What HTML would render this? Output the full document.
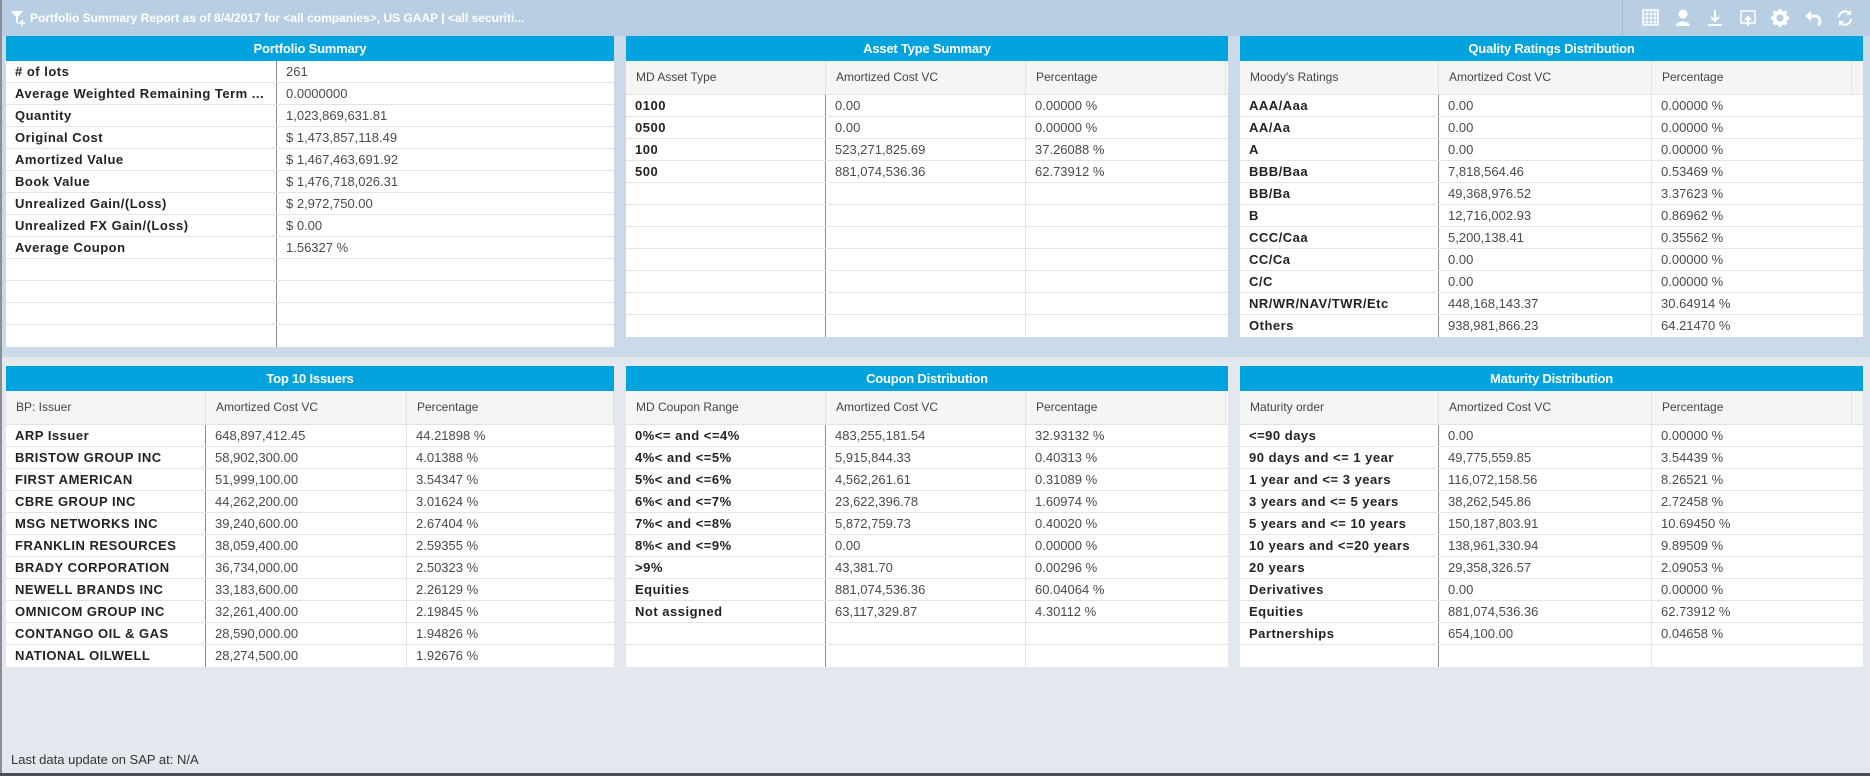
<!DOCTYPE html>
<html><head><meta charset="utf-8"><style>
*{margin:0;padding:0;box-sizing:border-box}
body{width:1870px;height:776px;overflow:hidden;background:#e3e8ef;font-family:"Liberation Sans",Arial,sans-serif;position:relative}
.topbar{position:absolute;left:0;top:0;width:1870px;height:36px;background:#b7cee3}
.upper{position:absolute;left:0;top:36px;width:1870px;height:321px;background:#cbdae8}
.lb{position:absolute;left:0;top:0;width:2px;height:776px;background:#8a8f96}
.bb{position:absolute;left:0;top:773px;width:1870px;height:3px;background:#4a4f57}
.title{position:absolute;left:30px;top:11px;color:#fff;font-weight:bold;font-size:12px;letter-spacing:0}
.sep{position:absolute;left:1622px;top:0;width:1px;height:36px;background:#9fb3c6}
.panel{position:absolute;background:#fff}
.hd{height:25px;background:#00a3dd;color:#fff;font-weight:bold;font-size:13px;text-align:center;line-height:25px;letter-spacing:-0.2px}
.ch{display:flex;height:34px;background:#f5f5f5;border-bottom:1px solid #e2e2e2}
.ch div{font-size:12px;color:#444;line-height:33px;padding-left:10px;border-right:1px solid #e2e2e2}
.r{display:flex;height:22px;border-bottom:1px solid #e4e4e4}
.r div{font-size:13px;line-height:21px;padding-left:9px;color:#4a4a4a;white-space:nowrap;overflow:hidden}
.r div:first-child{font-weight:bold;color:#222;border-right:1px solid #8c8c8c;letter-spacing:0.5px}
.r div:nth-child(2){border-right:1px solid #e4e4e4}
.foot{position:absolute;left:11px;top:752px;font-size:13px;color:#333}
.ic{position:absolute;top:8px}
</style></head><body>
<div class="topbar"></div>
<div class="upper"></div>
<div class="lb"></div>
<svg style="position:absolute;left:10px;top:10px" width="18" height="17" viewBox="0 0 18 17"><path d="M1 1h12l-5 6v7l-2-2V7z" fill="#fff"/><path d="M12 10v6M9 13h6" stroke="#fff" stroke-width="1.6"/></svg>
<div class="title">Portfolio Summary Report as of 8/4/2017 for &lt;all companies&gt;, US GAAP | &lt;all securiti...</div>
<div class="sep"></div>
<svg class="ic" style="left:1641px" width="20" height="20" viewBox="0 0 20 20"><rect x="2" y="2" width="15" height="15" fill="none" stroke="#fff" stroke-width="1.5"/><path d="M2 6h15M2 10h15M2 14h15M6 2v15M10 2v15M14 2v15" stroke="#fff" stroke-width="1"/></svg>
<svg class="ic" style="left:1673px" width="20" height="20" viewBox="0 0 20 20"><circle cx="10" cy="6" r="4.5" fill="#fff"/><path d="M3 18c0-6 14-6 14 0z" fill="#fff"/></svg>
<svg class="ic" style="left:1705px" width="20" height="20" viewBox="0 0 20 20"><path d="M10 2v11M6 9l4 4 4-4" stroke="#fff" stroke-width="2" fill="none"/><path d="M3 17h14" stroke="#fff" stroke-width="2"/></svg>
<svg class="ic" style="left:1738px" width="20" height="20" viewBox="0 0 20 20"><rect x="3" y="3" width="14" height="12" fill="none" stroke="#fff" stroke-width="1.5"/><path d="M10 18V9M7 12l3-3 3 3" stroke="#fff" stroke-width="2" fill="none"/></svg>
<svg class="ic" style="left:1770px" width="20" height="20" viewBox="0 0 20 20"><circle cx="10" cy="10" r="5.5" fill="none" stroke="#fff" stroke-width="4"/><path d="M10 1v4M10 15v4M1 10h4M15 10h4M3.6 3.6l3 3M13.4 13.4l3 3M3.6 16.4l3-3M13.4 6.6l3-3" stroke="#fff" stroke-width="3"/></svg>
<svg class="ic" style="left:1803px" width="20" height="20" viewBox="0 0 20 20"><path d="M5 8h7a5 5 0 0 1 3 9" stroke="#fff" stroke-width="3" fill="none"/><path d="M2 8l6-5v10z" fill="#fff"/></svg>
<svg class="ic" style="left:1835px" width="20" height="20" viewBox="0 0 20 20"><path d="M4 9a6 6 0 0 1 11-3M16 11a6 6 0 0 1-11 3" stroke="#fff" stroke-width="2.2" fill="none"/><path d="M16 2v5h-5zM4 18v-5h5z" fill="#fff"/></svg>

<div class="panel" style="left:6px;top:36px;width:608px;height:311px">
<div class="hd">Portfolio Summary</div>
<div class="r"><div style="width:271px"># of lots</div><div style="width:337px;border-right:none">261</div></div>
<div class="r"><div style="width:271px">Average Weighted Remaining Term ...</div><div style="width:337px;border-right:none">0.0000000</div></div>
<div class="r"><div style="width:271px">Quantity</div><div style="width:337px;border-right:none">1,023,869,631.81</div></div>
<div class="r"><div style="width:271px">Original Cost</div><div style="width:337px;border-right:none">$ 1,473,857,118.49</div></div>
<div class="r"><div style="width:271px">Amortized Value</div><div style="width:337px;border-right:none">$ 1,467,463,691.92</div></div>
<div class="r"><div style="width:271px">Book Value</div><div style="width:337px;border-right:none">$ 1,476,718,026.31</div></div>
<div class="r"><div style="width:271px">Unrealized Gain/(Loss)</div><div style="width:337px;border-right:none">$ 2,972,750.00</div></div>
<div class="r"><div style="width:271px">Unrealized FX Gain/(Loss)</div><div style="width:337px;border-right:none">$ 0.00</div></div>
<div class="r"><div style="width:271px">Average Coupon</div><div style="width:337px;border-right:none">1.56327 %</div></div>
<div class="r"><div style="width:271px"></div><div style="width:337px;border-right:none"></div></div>
<div class="r"><div style="width:271px"></div><div style="width:337px;border-right:none"></div></div>
<div class="r"><div style="width:271px"></div><div style="width:337px;border-right:none"></div></div>
<div class="r" style="border-bottom:none"><div style="width:271px"></div><div style="width:337px;border-right:none"></div></div>
</div>

<div class="panel" style="left:626px;top:36px;width:602px;height:301px">
<div class="hd">Asset Type Summary</div>
<div class="ch"><div style="width:200px">MD Asset Type</div><div style="width:200px">Amortized Cost VC</div><div style="width:200px">Percentage</div></div>
<div class="r"><div style="width:200px">0100</div><div style="width:200px">0.00</div><div>0.00000 %</div></div>
<div class="r"><div style="width:200px">0500</div><div style="width:200px">0.00</div><div>0.00000 %</div></div>
<div class="r"><div style="width:200px">100</div><div style="width:200px">523,271,825.69</div><div>37.26088 %</div></div>
<div class="r"><div style="width:200px">500</div><div style="width:200px">881,074,536.36</div><div>62.73912 %</div></div>
<div class="r"><div style="width:200px"></div><div style="width:200px"></div><div></div></div>
<div class="r"><div style="width:200px"></div><div style="width:200px"></div><div></div></div>
<div class="r"><div style="width:200px"></div><div style="width:200px"></div><div></div></div>
<div class="r"><div style="width:200px"></div><div style="width:200px"></div><div></div></div>
<div class="r"><div style="width:200px"></div><div style="width:200px"></div><div></div></div>
<div class="r"><div style="width:200px"></div><div style="width:200px"></div><div></div></div>
<div class="r" style="border-bottom:none"><div style="width:200px"></div><div style="width:200px"></div><div></div></div>
</div>

<div class="panel" style="left:1240px;top:36px;width:623px;height:301px">
<div class="hd">Quality Ratings Distribution</div>
<div class="ch"><div style="width:199px">Moody's Ratings</div><div style="width:213px">Amortized Cost VC</div><div style="width:200px">Percentage</div></div>
<div class="r"><div style="width:199px">AAA/Aaa</div><div style="width:213px">0.00</div><div>0.00000 %</div></div>
<div class="r"><div style="width:199px">AA/Aa</div><div style="width:213px">0.00</div><div>0.00000 %</div></div>
<div class="r"><div style="width:199px">A</div><div style="width:213px">0.00</div><div>0.00000 %</div></div>
<div class="r"><div style="width:199px">BBB/Baa</div><div style="width:213px">7,818,564.46</div><div>0.53469 %</div></div>
<div class="r"><div style="width:199px">BB/Ba</div><div style="width:213px">49,368,976.52</div><div>3.37623 %</div></div>
<div class="r"><div style="width:199px">B</div><div style="width:213px">12,716,002.93</div><div>0.86962 %</div></div>
<div class="r"><div style="width:199px">CCC/Caa</div><div style="width:213px">5,200,138.41</div><div>0.35562 %</div></div>
<div class="r"><div style="width:199px">CC/Ca</div><div style="width:213px">0.00</div><div>0.00000 %</div></div>
<div class="r"><div style="width:199px">C/C</div><div style="width:213px">0.00</div><div>0.00000 %</div></div>
<div class="r"><div style="width:199px">NR/WR/NAV/TWR/Etc</div><div style="width:213px">448,168,143.37</div><div>30.64914 %</div></div>
<div class="r" style="border-bottom:none"><div style="width:199px">Others</div><div style="width:213px">938,981,866.23</div><div>64.21470 %</div></div>
</div>

<div class="panel" style="left:6px;top:366px;width:608px;height:301px">
<div class="hd">Top 10 Issuers</div>
<div class="ch"><div style="width:200px">BP: Issuer</div><div style="width:201px">Amortized Cost VC</div><div style="width:207px">Percentage</div></div>
<div class="r"><div style="width:200px">ARP Issuer</div><div style="width:201px">648,897,412.45</div><div>44.21898 %</div></div>
<div class="r"><div style="width:200px">BRISTOW GROUP INC</div><div style="width:201px">58,902,300.00</div><div>4.01388 %</div></div>
<div class="r"><div style="width:200px">FIRST AMERICAN</div><div style="width:201px">51,999,100.00</div><div>3.54347 %</div></div>
<div class="r"><div style="width:200px">CBRE GROUP INC</div><div style="width:201px">44,262,200.00</div><div>3.01624 %</div></div>
<div class="r"><div style="width:200px">MSG NETWORKS INC</div><div style="width:201px">39,240,600.00</div><div>2.67404 %</div></div>
<div class="r"><div style="width:200px">FRANKLIN RESOURCES</div><div style="width:201px">38,059,400.00</div><div>2.59355 %</div></div>
<div class="r"><div style="width:200px">BRADY CORPORATION</div><div style="width:201px">36,734,000.00</div><div>2.50323 %</div></div>
<div class="r"><div style="width:200px">NEWELL BRANDS INC</div><div style="width:201px">33,183,600.00</div><div>2.26129 %</div></div>
<div class="r"><div style="width:200px">OMNICOM GROUP INC</div><div style="width:201px">32,261,400.00</div><div>2.19845 %</div></div>
<div class="r"><div style="width:200px">CONTANGO OIL &amp; GAS</div><div style="width:201px">28,590,000.00</div><div>1.94826 %</div></div>
<div class="r" style="border-bottom:none"><div style="width:200px">NATIONAL OILWELL</div><div style="width:201px">28,274,500.00</div><div>1.92676 %</div></div>
</div>

<div class="panel" style="left:626px;top:366px;width:602px;height:301px">
<div class="hd">Coupon Distribution</div>
<div class="ch"><div style="width:200px">MD Coupon Range</div><div style="width:200px">Amortized Cost VC</div><div style="width:200px">Percentage</div></div>
<div class="r"><div style="width:200px">0%&lt;= and &lt;=4%</div><div style="width:200px">483,255,181.54</div><div>32.93132 %</div></div>
<div class="r"><div style="width:200px">4%&lt; and &lt;=5%</div><div style="width:200px">5,915,844.33</div><div>0.40313 %</div></div>
<div class="r"><div style="width:200px">5%&lt; and &lt;=6%</div><div style="width:200px">4,562,261.61</div><div>0.31089 %</div></div>
<div class="r"><div style="width:200px">6%&lt; and &lt;=7%</div><div style="width:200px">23,622,396.78</div><div>1.60974 %</div></div>
<div class="r"><div style="width:200px">7%&lt; and &lt;=8%</div><div style="width:200px">5,872,759.73</div><div>0.40020 %</div></div>
<div class="r"><div style="width:200px">8%&lt; and &lt;=9%</div><div style="width:200px">0.00</div><div>0.00000 %</div></div>
<div class="r"><div style="width:200px">&gt;9%</div><div style="width:200px">43,381.70</div><div>0.00296 %</div></div>
<div class="r"><div style="width:200px">Equities</div><div style="width:200px">881,074,536.36</div><div>60.04064 %</div></div>
<div class="r"><div style="width:200px">Not assigned</div><div style="width:200px">63,117,329.87</div><div>4.30112 %</div></div>
<div class="r"><div style="width:200px"></div><div style="width:200px"></div><div></div></div>
<div class="r" style="border-bottom:none"><div style="width:200px"></div><div style="width:200px"></div><div></div></div>
</div>

<div class="panel" style="left:1240px;top:366px;width:623px;height:301px">
<div class="hd">Maturity Distribution</div>
<div class="ch"><div style="width:199px">Maturity order</div><div style="width:213px">Amortized Cost VC</div><div style="width:200px">Percentage</div></div>
<div class="r"><div style="width:199px">&lt;=90 days</div><div style="width:213px">0.00</div><div>0.00000 %</div></div>
<div class="r"><div style="width:199px">90 days and &lt;= 1 year</div><div style="width:213px">49,775,559.85</div><div>3.54439 %</div></div>
<div class="r"><div style="width:199px">1 year and &lt;= 3 years</div><div style="width:213px">116,072,158.56</div><div>8.26521 %</div></div>
<div class="r"><div style="width:199px">3 years and &lt;= 5 years</div><div style="width:213px">38,262,545.86</div><div>2.72458 %</div></div>
<div class="r"><div style="width:199px">5 years and &lt;= 10 years</div><div style="width:213px">150,187,803.91</div><div>10.69450 %</div></div>
<div class="r"><div style="width:199px">10 years and &lt;=20 years</div><div style="width:213px">138,961,330.94</div><div>9.89509 %</div></div>
<div class="r"><div style="width:199px">20 years</div><div style="width:213px">29,358,326.57</div><div>2.09053 %</div></div>
<div class="r"><div style="width:199px">Derivatives</div><div style="width:213px">0.00</div><div>0.00000 %</div></div>
<div class="r"><div style="width:199px">Equities</div><div style="width:213px">881,074,536.36</div><div>62.73912 %</div></div>
<div class="r"><div style="width:199px">Partnerships</div><div style="width:213px">654,100.00</div><div>0.04658 %</div></div>
<div class="r" style="border-bottom:none"><div style="width:199px"></div><div style="width:213px"></div><div></div></div>
</div>

<div class="foot">Last data update on SAP at: N/A</div>
<div class="bb"></div>
</body></html>
